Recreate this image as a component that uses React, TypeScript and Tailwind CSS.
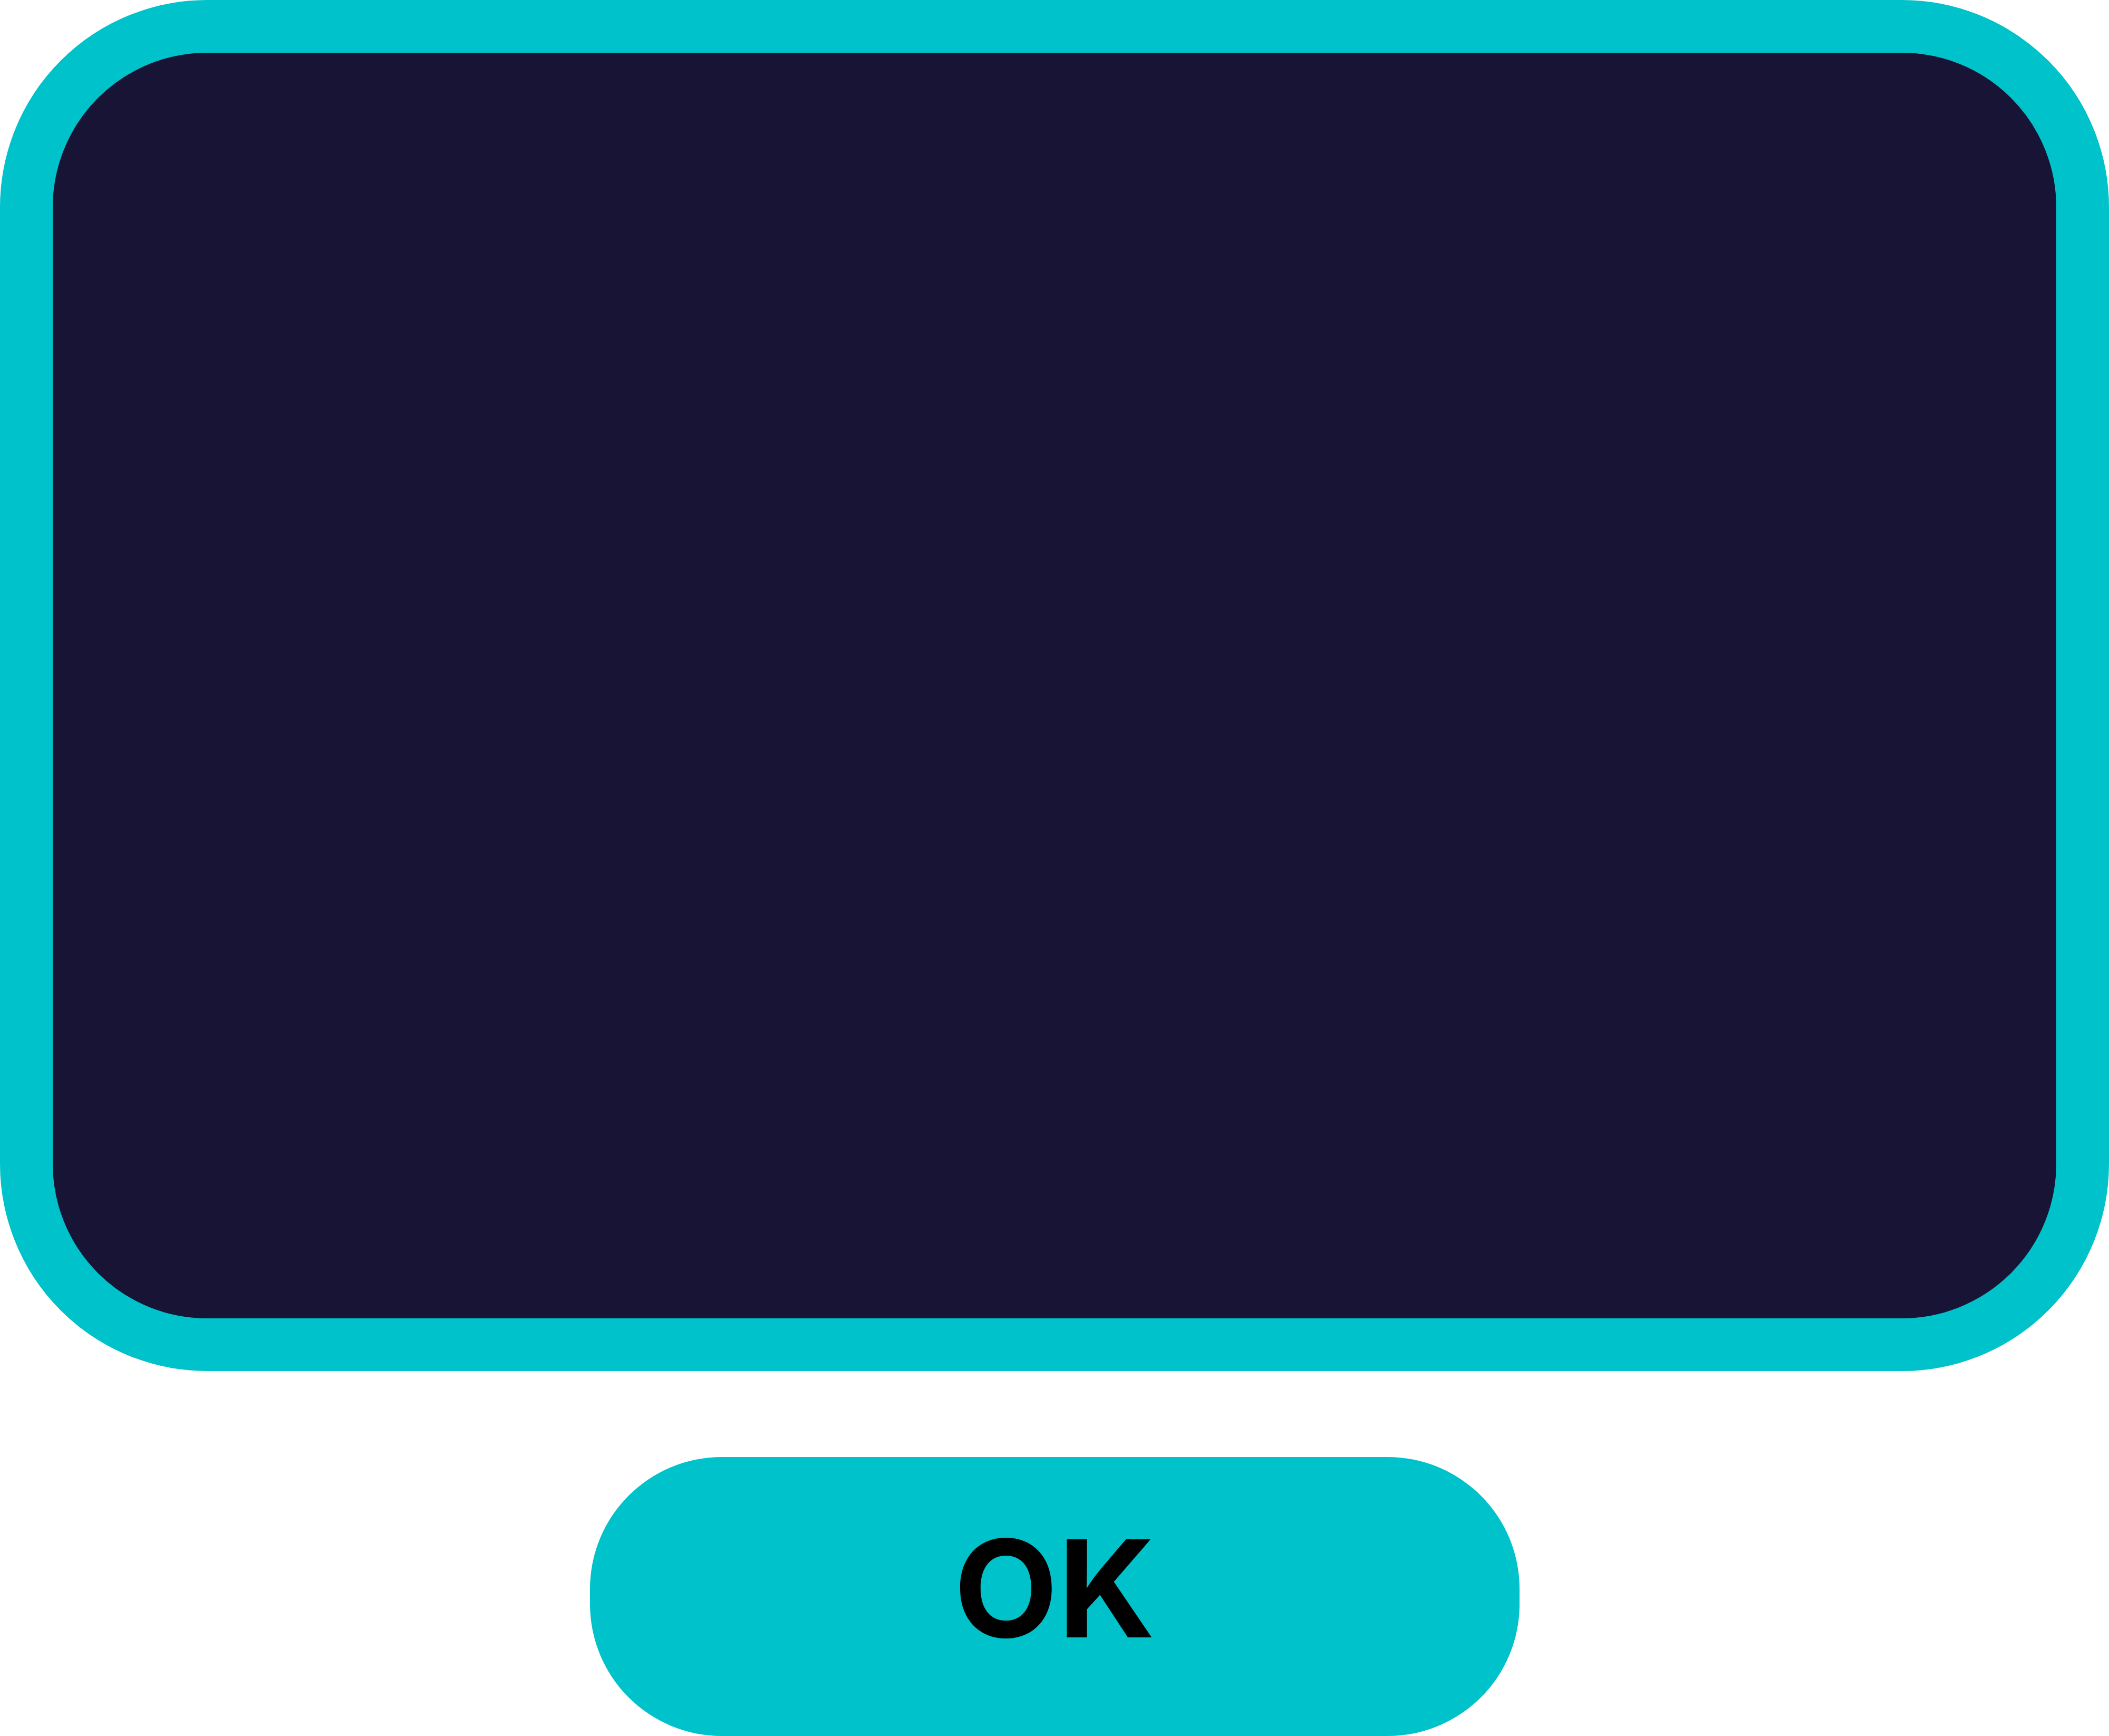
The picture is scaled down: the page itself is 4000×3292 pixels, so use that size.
export default function App() {
  return (
    <div className="flex w-[4000px] flex-col items-center bg-white font-['Inter',sans-serif]">
      {/* screen panel */}
      <div className="h-[2600px] w-full rounded-[393px] border-[100px] border-[#00c2cb] bg-[#171435]" />

      {/* action */}
      <button className="mt-[163px] flex h-[529px] w-[1763px] items-center justify-center rounded-[250px] bg-[#00c2cb] pb-[32px] text-[256px] font-bold leading-none text-black">
        OK
      </button>
    </div>
  );
}
